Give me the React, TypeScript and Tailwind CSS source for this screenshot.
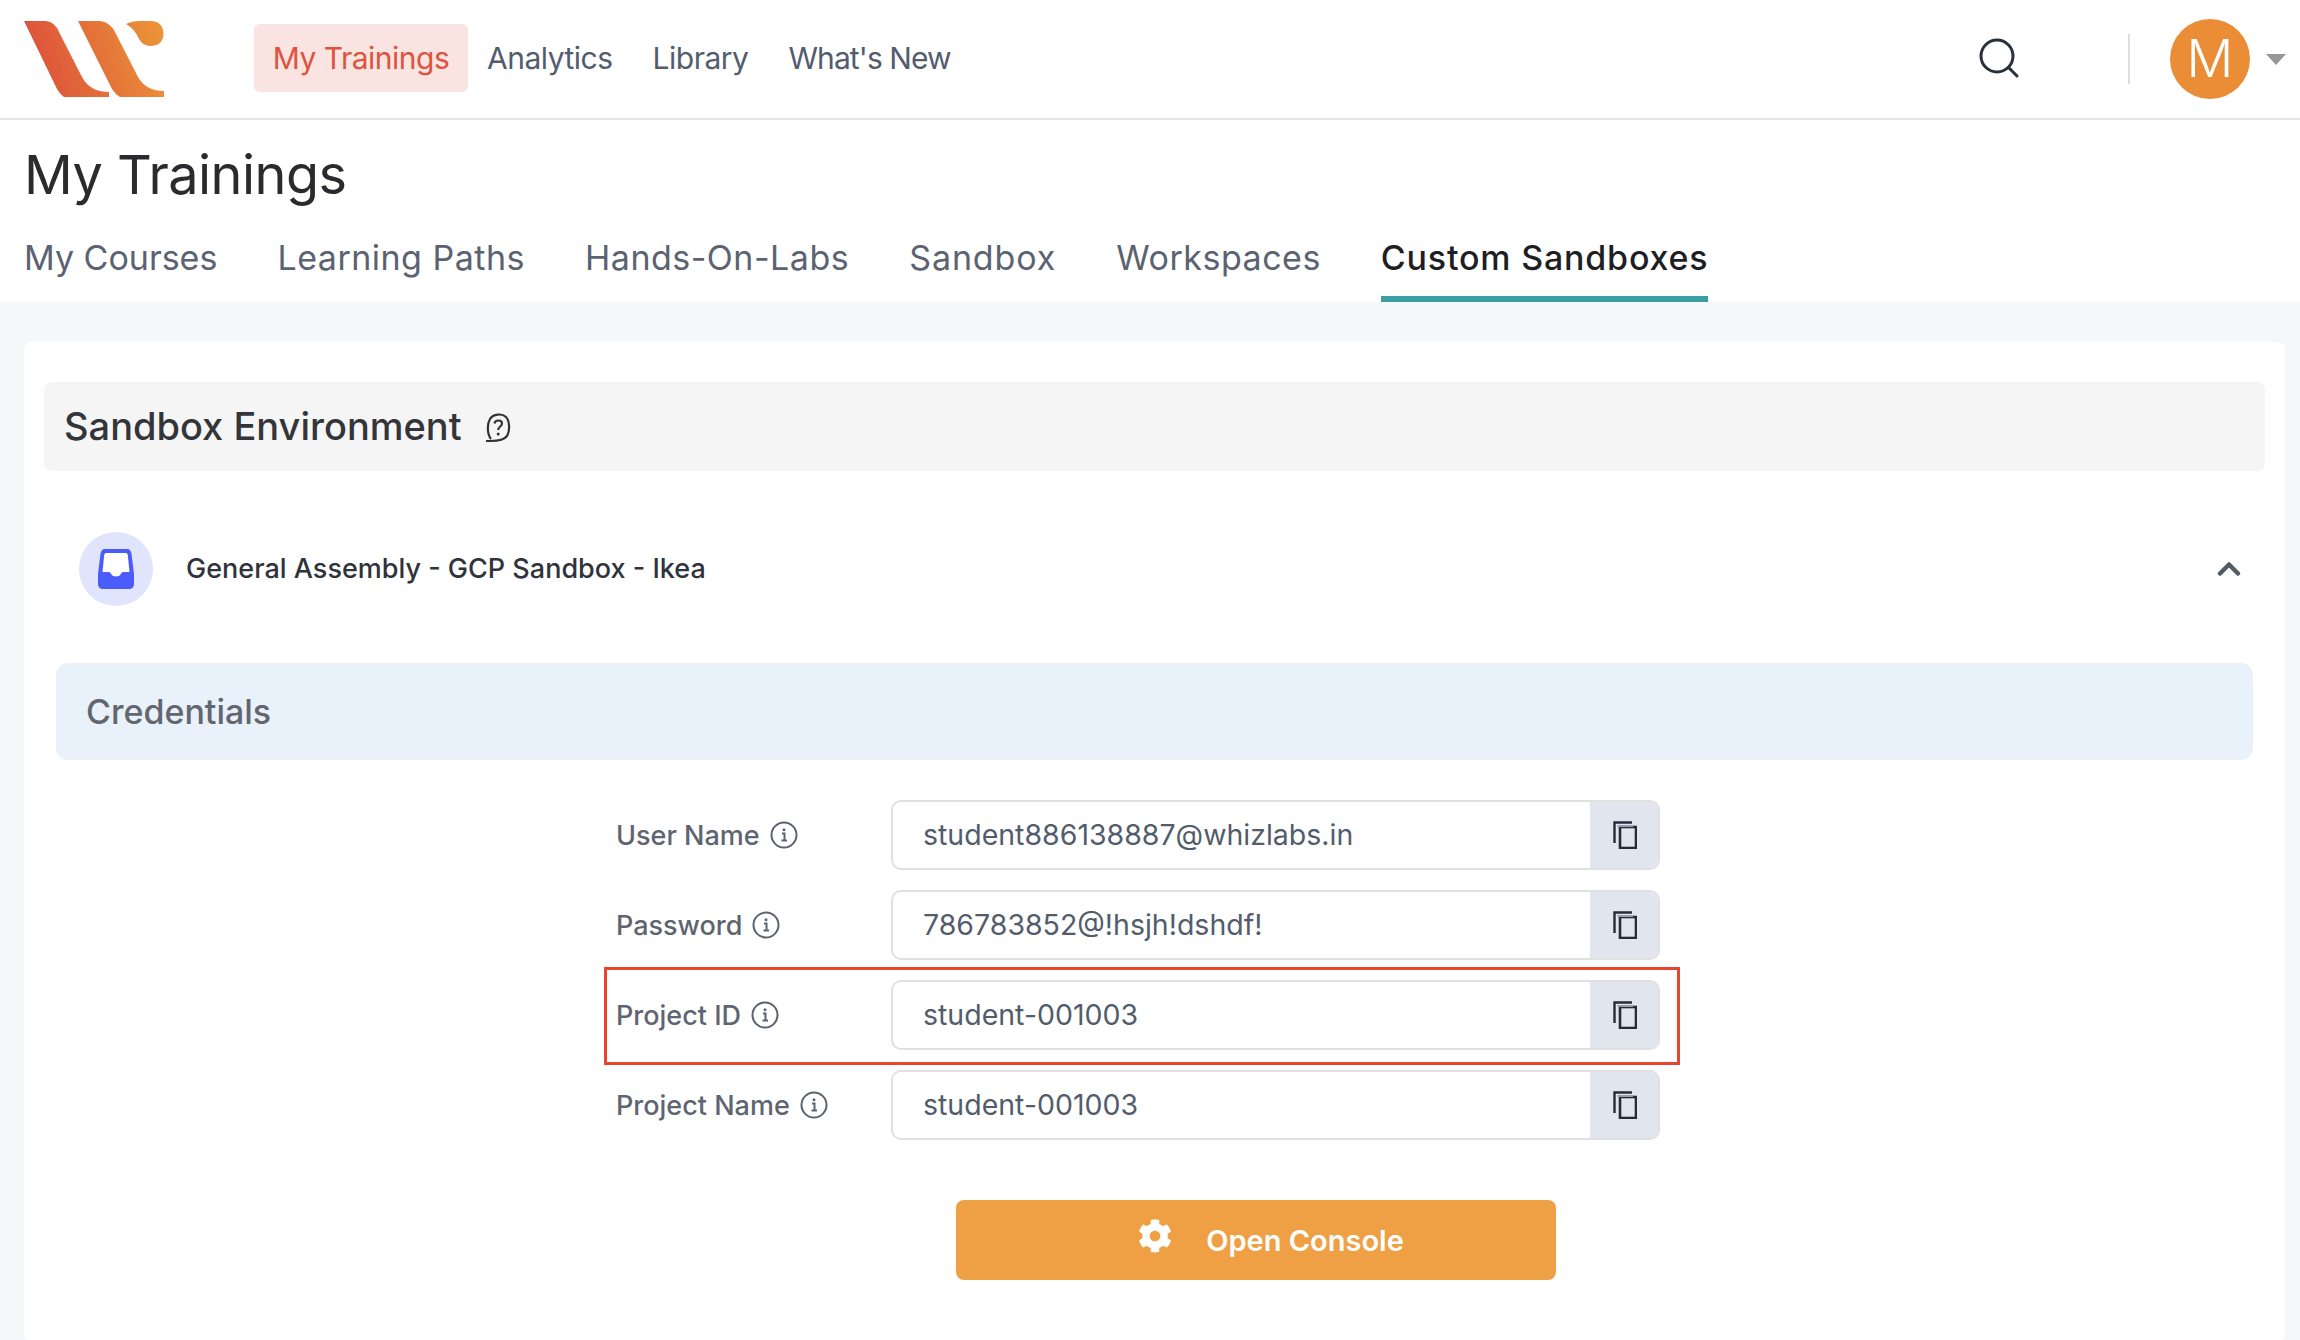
import { ChevronUp } from "lucide-react";
import { FaCog } from "react-icons/fa";

const navItems = [
  { label: "Analytics", className: "" },
  { label: "Library", className: "" },
  { label: "What's New", className: "tracking-[-0.9px]" },
];
const tabs = [
  { label: "My Courses", className: "tracking-normal" },
  { label: "Learning Paths", className: "" },
  { label: "Hands-On-Labs", className: "" },
  { label: "Sandbox", className: "tracking-[0.9px]" },
  { label: "Workspaces", className: "" },
];
const credentials = [
  { label: "User Name", value: "student886138887@whizlabs.in" },
  { label: "Password", value: "786783852@!hsjh!dshdf!" },
  { label: "Project ID", value: "student-001003", highlight: true },
  { label: "Project Name", value: "student-001003" },
];

function Logo() {
  return (
    <svg width="140" height="76" viewBox="24 20 140 76" className="shrink-0">
      <defs>
        <linearGradient id="logo" x1="24" y1="70" x2="164" y2="30" gradientUnits="userSpaceOnUse">
          <stop offset="0" stopColor="#db4d3b" />
          <stop offset="1" stopColor="#ec9537" />
        </linearGradient>
      </defs>
      <path d="M24 20H46Q55 21 59 31L82 76Q90 91 109 91V96H64Q60 93 57 88Z" fill="url(#logo)" />
      <path d="M78 20H100Q110 21 115 31L138 76Q146 90 164 90V96H120Q115 93 112 88Z" fill="url(#logo)" />
      <path d="M126 23Q132 20 140 20H150Q163 20 163.5 33Q163 45 150 45Q143 45 139 38Q135 28 126 23Z" fill="url(#logo)" />
    </svg>
  );
}

function InfoIcon() {
  return (
    <svg width="28" height="28" viewBox="0 0 28 28" fill="none" className="shrink-0">
      <circle cx="14" cy="14" r="12.5" stroke="#5b6270" strokeWidth="2" />
      <circle cx="14" cy="8.8" r="1.5" fill="#5b6270" />
      <path d="M12 12.5H14.5V19.5M11.5 19.5H17" stroke="#5b6270" strokeWidth="2" />
    </svg>
  );
}

function CopyIcon() {
  return (
    <svg width="24" height="28" viewBox="0 0 24 28" fill="none">
      <path d="M1.5 22V1.5H19" stroke="#262b38" strokeWidth="2.4" />
      <rect x="7" y="6" width="16" height="21" stroke="#262b38" strokeWidth="2.6" />
      <path d="M4.5 5H20" stroke="#9a9ea8" strokeWidth="2" />
    </svg>
  );
}

function HelpIcon() {
  return (
    <svg width="28" height="30" viewBox="0 0 28 30" fill="none" className="mt-[3px] shrink-0">
      <path d="M7 26C3 21 3 11 6 6C9 1 18 0 22 4C26 8 26 18 23 23C20 27 13 28 7 28H2" stroke="#333" strokeWidth="2.2" />
      <path d="M10.5 10.5C11 6.5 18 6.5 18 10.5C18 13.5 14.2 13.5 14.2 17" stroke="#333" strokeWidth="2.2" />
      <circle cx="14.2" cy="21" r="1.5" fill="#333" />
    </svg>
  );
}

function InboxIcon() {
  return (
    <svg width="36" height="40" viewBox="0 0 36 40" fill="none">
      <path d="M7 0H29C32 0 33 2 33.5 5L36 25V35C36 38 34 40 31 40H5C2 40 0 38 0 35V25L2.5 5C3 2 4 0 7 0Z" fill="#4a5cf9" />
      <path d="M8 4H28C29 4 29.6 5 29.8 6L31.5 23H25.5C24 23 23 24 22.5 25.5C21.5 28 14.5 28 13.5 25.5C13 24 12 23 10.5 23H4.5L6.2 6C6.4 5 7 4 8 4Z" fill="#fff" />
    </svg>
  );
}

function SearchIcon() {
  return (
    <svg width="42" height="42" viewBox="0 0 42 42" fill="none">
      <circle cx="18" cy="18" r="16" stroke="#2a2f3d" strokeWidth="3" />
      <path d="M30 30L38 38" stroke="#2a2f3d" strokeWidth="3" strokeLinecap="round" />
    </svg>
  );
}

function CredentialRow({ label, value, highlight }: { label: string; value: string; highlight?: boolean }) {
  return (
    <div className="relative flex h-[70px] items-center">
      <div className="flex w-[275px] items-center gap-[10px] text-[27px] font-medium text-[#5f6570]">
        <span className="translate-y-px">{label}</span>
        <InfoIcon />
      </div>
      <div className="flex h-[70px] w-[769px] overflow-hidden rounded-[10px] border-2 border-[#e0e0e0]">
        <div className="flex flex-1 items-center pl-[30px] text-[28.5px] text-[#535c6b]">{value}</div>
        <div className="-my-[2px] -mr-[2px] flex w-[70px] items-center justify-center bg-[#e1e5ed]">
          <CopyIcon />
        </div>
      </div>
      {highlight && (
        <div className="absolute -top-[13px] -left-[12px] h-[98px] w-[1076px] border-[3px] border-[#e8432d]" />
      )}
    </div>
  );
}

export default function App() {
  return (
    <div className="h-[1340px] overflow-hidden bg-[#f5f7fb] font-[Inter,sans-serif]">
      <header className="flex h-[120px] items-center border-b-2 border-[#e3e3ea] bg-white pl-6 pr-[14px]">
        <Logo />
        <nav className="ml-[90px] flex -translate-y-px items-center gap-[19px] text-[30px] tracking-[-0.5px] text-[#535c6f]">
          <span className="flex h-[68px] w-[214px] items-center justify-center rounded-md bg-[#f9e4e1] text-[#de5340]">
            My Trainings
          </span>
          {navItems.map((item) => (
            <span key={item.label} className={`mr-[21px] ${item.className}`}>
              {item.label}
            </span>
          ))}
        </nav>
        <div className="ml-auto flex items-center">
          <SearchIcon />
          <div className="ml-[107px] h-[50px] w-[2px] bg-[#dddddd]" />
          <div className="ml-10 flex h-20 w-20 items-center justify-center rounded-full bg-[#ea8d36] text-[52px] font-light text-white">
            M
          </div>
          <div className="ml-4 h-0 w-0 border-x-[10px] border-t-[11px] border-x-transparent border-t-[#979797]" />
        </div>
      </header>

      <div className="h-[182px] bg-white pl-6">
        <h1 className="pt-[22px] text-[54px] leading-[66px] tracking-[-0.5px] text-[#2b2b2f]">My Trainings</h1>
        <div className="mt-[22px] flex items-start gap-[60px] text-[34px] tracking-[0.5px] text-[#5b6272]">
          {tabs.map((tab) => (
            <span key={tab.label} className={`h-[72px] pt-[6px] leading-[44px] ${tab.className}`}>
              {tab.label}
            </span>
          ))}
          <span className="h-[72px] border-b-[6px] border-[#3b9ea0] pt-[6px] leading-[44px] font-medium tracking-[0.8px] text-[#1d1f24]">
            Custom Sandboxes
          </span>
        </div>
      </div>

      <main className="mx-6 mt-10 mr-[15px] h-[1000px] rounded-lg bg-white px-5 pt-10">
        <div className="flex h-[89px] items-center gap-[22px] rounded-lg bg-[#f5f5f5] pl-5 text-[38px] font-medium text-[#33353a]">
          <span>Sandbox Environment</span>
          <HelpIcon />
        </div>

        <div className="mt-[61px] flex items-center pl-[35px] pr-[18px]">
          <div className="flex h-[74px] w-[74px] items-center justify-center rounded-full bg-[#e0e4fd]">
            <InboxIcon />
          </div>
          <span className="ml-[33px] text-[27px] font-medium text-[#30333b]">
            General Assembly - GCP Sandbox - Ikea
          </span>
          <ChevronUp className="ml-auto text-[#555b66]" size={36} strokeWidth={3} />
        </div>

        <div className="mt-[57px] ml-3 mr-3 flex h-[97px] items-center rounded-xl bg-[#e9f1fb] pl-[30px] text-[34px] font-medium text-[#62666f]">
          Credentials
        </div>

        <div className="mt-10 ml-[572px] flex flex-col gap-5">
          {credentials.map((row) => (
            <CredentialRow key={row.label} {...row} />
          ))}
        </div>

        <button className="mt-[60px] ml-[912px] flex h-20 w-[600px] items-center justify-center gap-[34px] rounded-lg bg-[#f0a044] pl-[30px] text-[29px] font-semibold text-white">
          <FaCog size={34} className="-mt-2" />
          <span className="translate-y-px">Open Console</span>
        </button>
      </main>
    </div>
  );
}
